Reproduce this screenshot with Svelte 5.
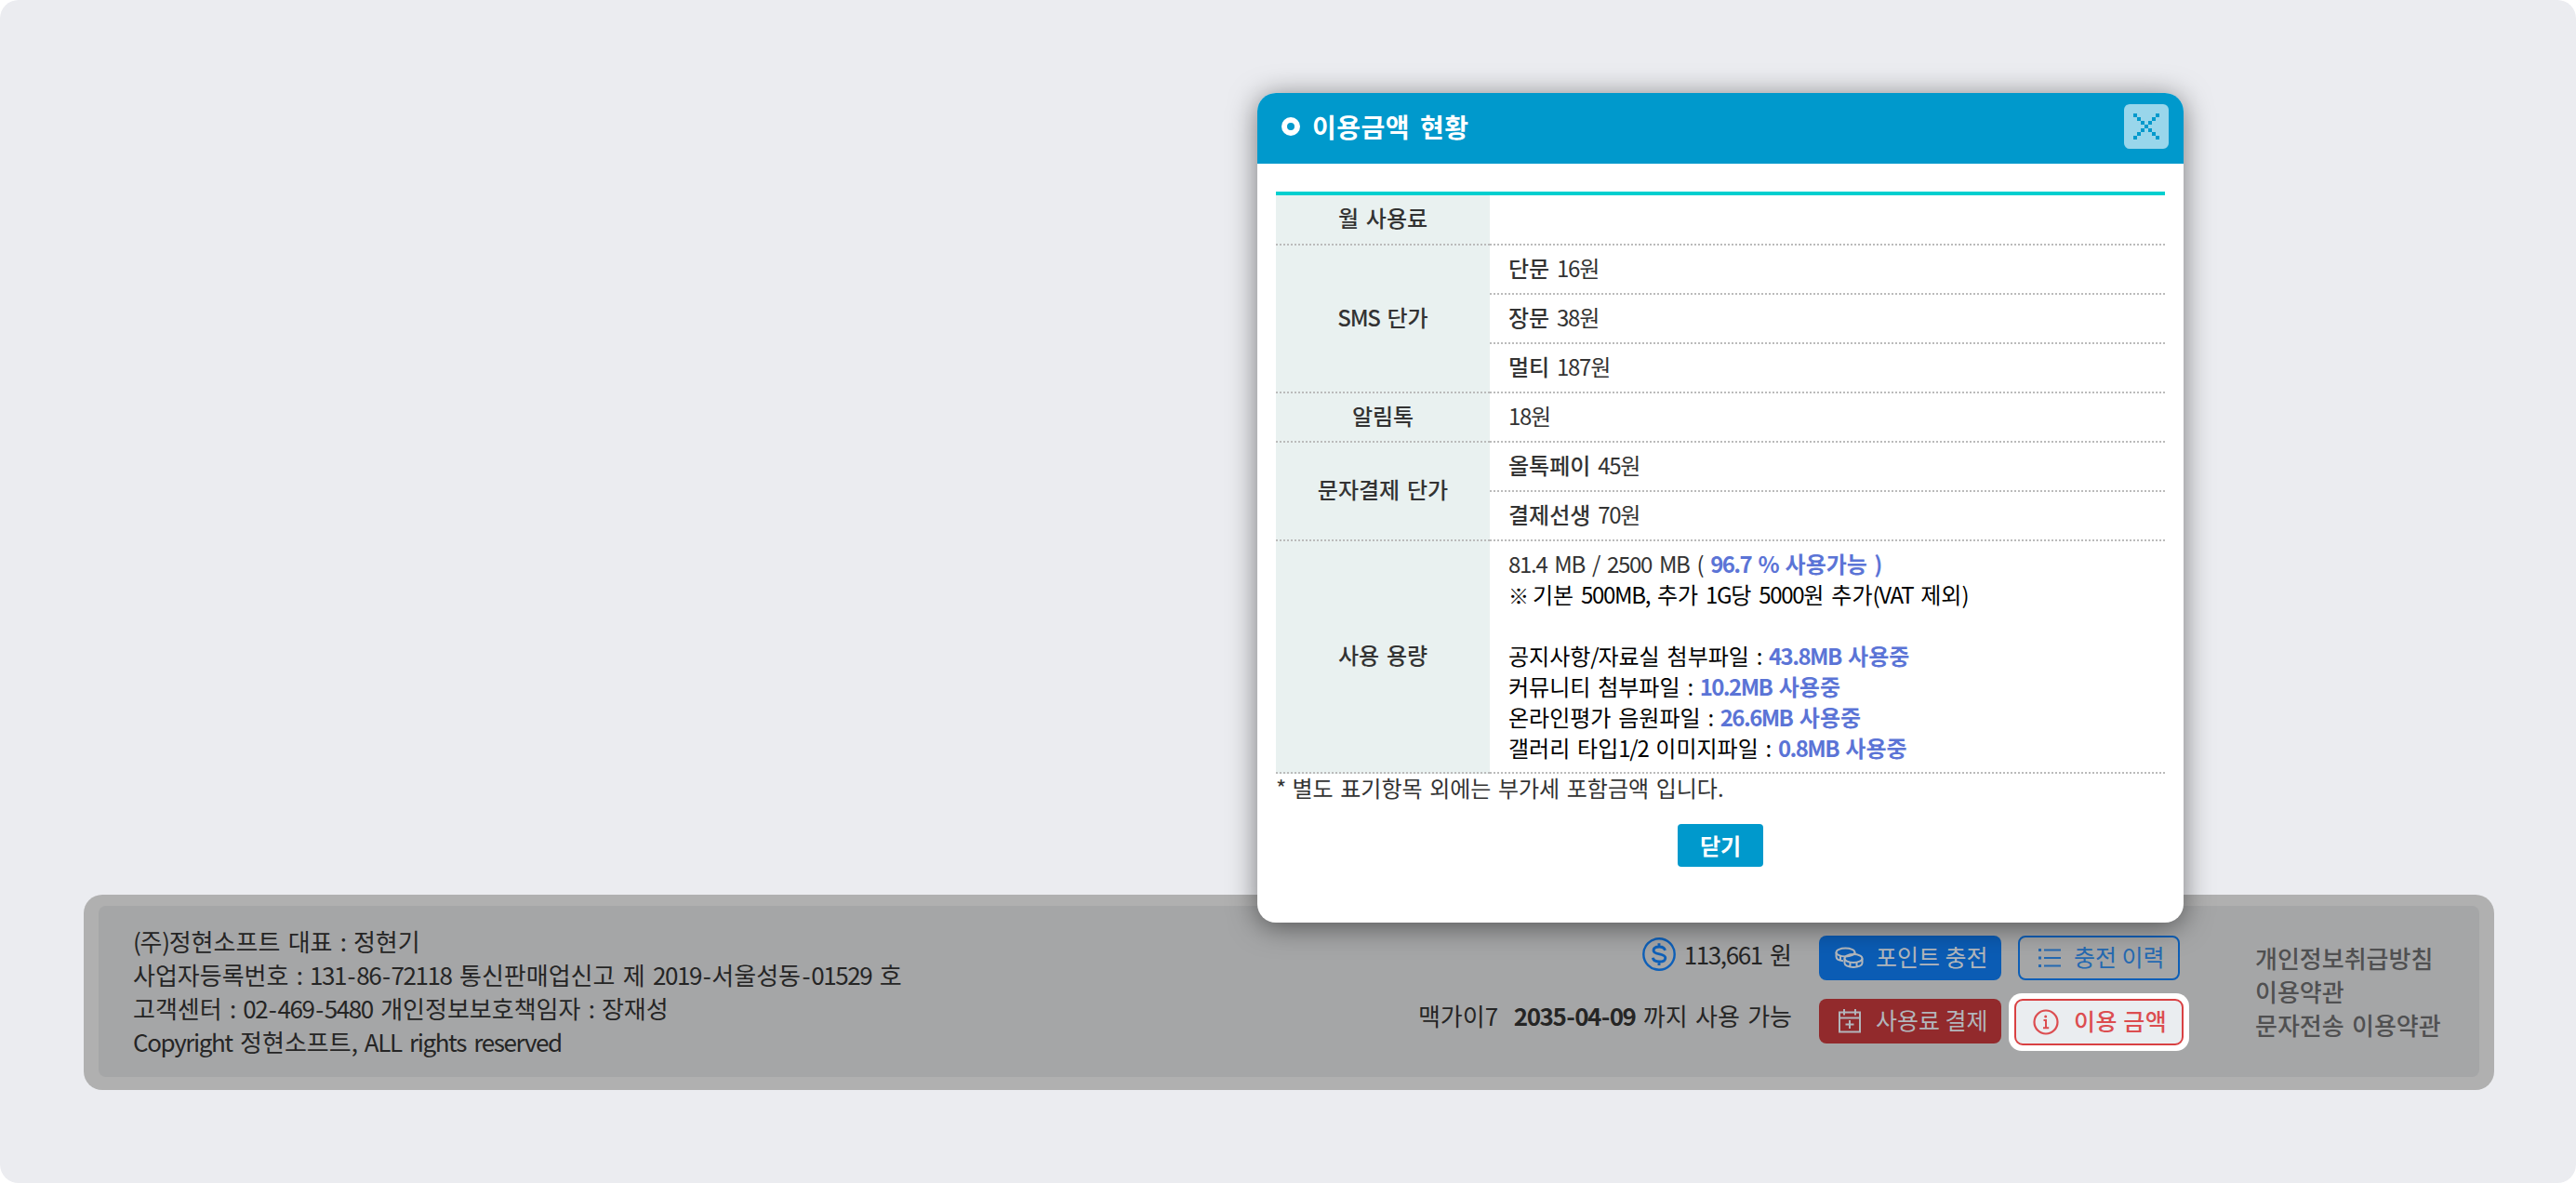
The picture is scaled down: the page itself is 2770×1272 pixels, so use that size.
<script>
  const company = [
    '(주)정현소프트 대표 : 정현기',
    '사업자등록번호 : 131-86-72118 통신판매업신고 제 2019-서울성동-01529 호',
    '고객센터 : 02-469-5480 개인정보보호책임자 : 장재성',
    'Copyright 정현소프트, ALL rights reserved'
  ];
  const links = ['개인정보취급방침', '이용약관', '문자전송 이용약관'];
  const groups = [
    { title: '월 사용료', rows: [{ label: '', value: '' }] },
    {
      title: 'SMS 단가',
      rows: [
        { label: '단문', value: '16원' },
        { label: '장문', value: '38원' },
        { label: '멀티', value: '187원' }
      ]
    },
    { title: '알림톡', rows: [{ label: '', value: '18원' }] },
    {
      title: '문자결제 단가',
      rows: [
        { label: '올톡페이', value: '45원' },
        { label: '결제선생', value: '70원' }
      ]
    }
  ];
  const files = [
    { name: '공지사항/자료실 첨부파일', size: '43.8MB' },
    { name: '커뮤니티 첨부파일', size: '10.2MB' },
    { name: '온라인평가 음원파일', size: '26.6MB' },
    { name: '갤러리 타입1/2 이미지파일', size: '0.8MB' }
  ];
  const crossCells = [0, 1, 2, 3, 4, 5, 6];

  // Latin runs are set tighter than the Hangul, hyphens a little wider.
  const split = (text) => text.match(/-|[\x21-\x2c\x2e-\x7e]+|[^\x21-\x7e]+/g) ?? [];
  const kind = (part) => (part === '-' ? 'dash' : /^[\x21-\x7e]/.test(part) ? 'latin' : '');
</script>

{#snippet mixed(text)}{#each split(text) as part}{#if kind(part)}<span class={kind(part)}>{part}</span>{:else}{part}{/if}{/each}{/snippet}

<div class="page">
  <footer class="panel">
    <div class="inner">
      <div class="company">
        {#each company as line}<p>{@render mixed(line)}</p>{/each}
      </div>

      <div class="status">
        <p class="points">
          <svg width="36" height="36" viewBox="0 0 36 36" fill="none" stroke="#0e60b9" stroke-width="2.4">
            <circle cx="18" cy="18" r="16.7" />
            <path d="M24.5 13.8c-.6-2.4-2.7-3.8-6.3-3.8-3.8 0-6.1 1.500-6.1 3.900 0 5.300 12.700 2.700 12.700 8 0 2.500-2.500 4.100-6.500 4.100-4 0-6.500-1.600-6.900-4.300M18 6.200V10M18 26v4" stroke-width="2.9" />
          </svg>
          <span>{@render mixed('113,661 원')}</span>
        </p>
        <p class="expiry"><span class="plan">{@render mixed('맥가이7')}</span><b class="date">{@render mixed('2035-04-09')}</b> 까지 사용 가능</p>
      </div>

      <div class="buttons">
        <button class="btn blue">
          <svg width="32" height="24" viewBox="0 0 32 24" fill="none" stroke="currentColor" stroke-width="2">
            <ellipse cx="11.500" cy="6" rx="10" ry="4.500" />
            <path d="M1.500 6v4.500c0 2.500 3 4.300 7.500 4.700M21.500 6v2M6 10v4.500" />
            <ellipse cx="20" cy="12.500" rx="9.500" ry="4.500" />
            <path d="M10.500 12.500v5c0 2.500 4 4.500 9.500 4.500s9.500-2 9.500-4.500v-5M16.500 17v4.500M23.500 17v4.500" />
          </svg>
          <span>포인트 충전</span>
        </button>
        <button class="btn outline">
          <svg width="26" height="24" viewBox="0 0 26 24" fill="none" stroke="currentColor" stroke-width="2">
            <path d="M7 3.500h18M7 12h18M7 20.500h18" />
            <path d="M1 3.500h3M1 12h3M1 20.500h3" stroke-width="3" />
          </svg>
          <span>충전 이력</span>
        </button>
        <button class="btn red">
          <svg width="26" height="28" viewBox="0 0 26 28" fill="none" stroke="currentColor" stroke-width="2">
            <path d="M2 4.500h22v21H2zM2 10.500h22M7 1v6.500M19 1v6.500M13 13v9M8.500 17.500h9" />
          </svg>
          <span>사용료 결제</span>
        </button>
        <div class="focus">
          <button class="btn danger">
            <svg width="28" height="28" viewBox="0 0 28 28" fill="none" stroke="currentColor" stroke-width="2.200">
              <circle cx="14" cy="14" r="12.500" />
              <path d="M11.500 12H14v8M11 20.200h6.200" stroke-width="2" />
              <circle cx="13.700" cy="8" r="1.500" fill="currentColor" stroke="none" />
            </svg>
            <span>이용 금액</span>
          </button>
        </div>
      </div>

      <nav class="links">
        {#each links as link}<p>{link}</p>{/each}
      </nav>
    </div>
  </footer>

  <section class="modal">
    <header class="bar">
      <svg class="ring" width="20" height="20" viewBox="0 0 20 20">
        <circle cx="10" cy="10" r="7" fill="none" stroke="#fff" stroke-width="6" />
      </svg>
      <h1>이용금액 현황</h1>
      <button class="close" aria-label="닫기">
        <svg width="28" height="28" viewBox="0 0 7 7" fill="#09c" shape-rendering="crispEdges">
          {#each crossCells as i}
            <rect x={i} y={i} width="1" height="1" />
            <rect x={6 - i} y={i} width="1" height="1" />
          {/each}
        </svg>
      </button>
    </header>

    <div class="body">
      <div class="table">
        {#each groups as group}
          <div class="group">
            <div class="head"><span>{@render mixed(group.title)}</span></div>
            <div class="rows">
              {#each group.rows as row}
                <div class="row">
                  {#if row.label}<b>{row.label}</b>&nbsp;{/if}{@render mixed(row.value)}
                </div>
              {/each}
            </div>
          </div>
        {/each}
        <div class="group">
          <div class="head"><span>사용 용량</span></div>
          <div class="usage">
            <p class="total">{@render mixed('81.4 MB / 2500 MB (')} <em>{@render mixed('96.7 % 사용가능 )')}</em></p>
            <p><span class="mark">※</span> {@render mixed('기본 500MB, 추가 1G당 5000원 추가(VAT 제외)')}</p>
            <p class="blank"></p>
            {#each files as file}
              <p>{@render mixed(`${file.name} :`)} <em>{@render mixed(`${file.size} 사용중`)}</em></p>
            {/each}
          </div>
        </div>
      </div>
      <p class="note">{@render mixed('* 별도 표기항목 외에는 부가세 포함금액 입니다.')}</p>
      <button class="ok">닫기</button>
    </div>
  </section>
</div>

<style>
  :global(body) { background: #fff; }
  * { box-sizing: border-box; }
  p, h1 { margin: 0; }
  button { font: inherit; border: 0; padding: 0; margin: 0; }
  svg { display: block; flex: none; }
  .page {
    position: relative;
    width: 2770px;
    height: 1272px;
    padding: 962px 88px 0 90px;
    overflow: hidden;
    border-radius: 20px;
    background: #ebecf0;
    color: #252525;
    font: 26px/36px "Noto Sans CJK KR", sans-serif;
    word-spacing: 2.500px;
    white-space: nowrap;
  }
  .latin { letter-spacing: -0.054em; }
  .dash { margin-left: 1.600px; letter-spacing: 0.600px; }
  .panel {
    width: 2592px;
    height: 210px;
    padding: 12px 16px 14px;
    border-radius: 20px;
    background: #b0b0b0;
  }
  .inner {
    display: flex;
    height: 184px;
    padding-left: 37px;
    border-radius: 8px;
    background: #a5a6a7;
  }
  .company { width: 1300px; padding-top: 20px; }
  .status {
    width: 484px;
    padding-top: 34px;
    display: flex;
    flex-direction: column;
    align-items: flex-end;
    gap: 30px;
  }
  .points { display: flex; gap: 9px; }
  .plan { margin-right: 18px; }
  .date { font-weight: 700; }
  .date .dash { margin-left: 0.800px; letter-spacing: -0.800px; }
  .buttons {
    display: grid;
    grid-template-columns: 196px 174px;
    grid-template-rows: 48px 48px;
    gap: 20px 18px;
    margin: 32px 0 0 29px;
  }
  .btn {
    display: flex;
    align-items: center;
    width: 100%;
    height: 48px;
    border-radius: 8px;
    font-size: 25px;
    line-height: 44px;
    word-spacing: 0;
  }
  .btn span { position: relative; top: -2px; }
  .blue, .red { color: #b2b6bb; padding-left: 17px; gap: 12px; }
  .blue { background: #0b5cb4; }
  .red { background: #922a2c; padding-left: 20px; gap: 15px; }
  .outline {
    border: 2px solid #0d5fb7;
    color: #2469b1;
    background: transparent;
    padding-left: 19px;
    gap: 13px;
  }
  .focus {
    width: 194px;
    height: 62px;
    margin: -6px 0 0 -10px;
    padding: 6px;
    border-radius: 14px;
    background: #fff;
  }
  .danger {
    height: 50px;
    border: 2px solid #d94143;
    border-radius: 9px;
    background: #eaedf0;
    color: #dc4d50;
    padding-left: 18px;
    gap: 16px;
    font-weight: 500;
  }
  .danger span { letter-spacing: 0.5px; }
  .links { margin: 38px 0 0 81px; color: #505051; font-weight: 500; }

  .modal {
    position: absolute;
    left: 1352px;
    top: 100px;
    width: 996px;
    height: 892px;
    border-radius: 20px;
    background: #fff;
    box-shadow: 0 4px 30px rgba(0, 0, 0, 0.5);
    color: #333;
    font-size: 24px;
    line-height: 33px;
  }
  .bar {
    display: flex;
    align-items: center;
    height: 76px;
    padding: 0 16px 4px 26px;
    border-radius: 20px 20px 0 0;
    background: #09c;
  }
  h1 {
    margin-left: 13px;
    color: #fff;
    font-size: 28px;
    font-weight: 700;
    letter-spacing: 0.5px;
    word-spacing: 4px;
  }
  .close {
    display: grid;
    place-items: center;
    width: 48px;
    height: 48px;
    margin-left: auto;
    border-radius: 6px;
    background: #99d6eb;
  }
  .body {
    display: flex;
    flex-direction: column;
    padding: 30px 20px 0;
  }
  .table { border-top: 4px solid #00cfcf; }
  .group { display: flex; }
  .head {
    display: grid;
    place-items: center;
    width: 230px;
    padding-bottom: 5px;
    border-bottom: 2px dotted #bbb;
    background: #e9f1f0;
    font-weight: 500;
  }
  .rows, .usage { flex: 1; }
  .row {
    height: 53px;
    padding: 7px 20px 0;
    border-bottom: 2px dotted #bbb;
  }
  .group:first-child .row { height: 54px; }
  b { font-weight: 500; }
  .usage {
    height: 250px;
    padding: 7px 20px 0;
    border-bottom: 2px dotted #bbb;
    color: #000;
  }
  .total { color: #333; }
  .mark { font-size: 22px; line-height: 1; letter-spacing: -4px; }
  .blank { height: 33px; }
  em { font-style: normal; font-weight: 700; color: #5b74d6; word-spacing: 2px; }
  em .latin { letter-spacing: -0.066em; }
  .note { height: 54px; margin: -2px 0 2px; word-spacing: 2.200px; }
  .ok {
    align-self: center;
    width: 92px;
    height: 46px;
    padding-bottom: 2px;
    border-radius: 4px;
    background: #09c;
    color: #fff;
    font-weight: 700;
  }
</style>
